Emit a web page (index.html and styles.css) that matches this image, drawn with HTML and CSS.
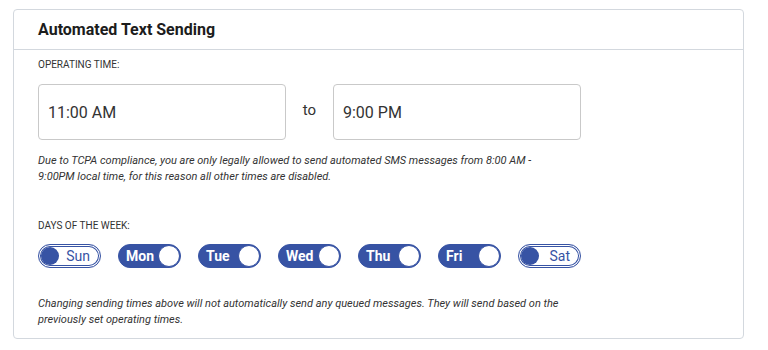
FILE: index.html
```html
<!DOCTYPE html>
<html>
<head>
<meta charset="utf-8">
<link rel="stylesheet" href="styles.css">
</head>
<body>
<div class="card">
  <div class="card-header">Automated Text Sending</div>
  <div class="card-body">
    <div class="label">OPERATING TIME:</div>
    <div class="time-row">
      <div class="input">11:00 AM</div>
      <div class="to">to</div>
      <div class="input">9:00 PM</div>
    </div>
    <p class="note">Due to TCPA compliance, you are only legally allowed to send automated SMS messages from 8:00 AM - 9:00PM local time, for this reason all other times are disabled.</p>
    <div class="label days-label">DAYS OF THE WEEK:</div>
    <div class="days">
      <div class="toggle off"><span class="knob"></span><span class="day">Sun</span></div>
      <div class="toggle on"><span class="day">Mon</span><span class="knob"></span></div>
      <div class="toggle on"><span class="day">Tue</span><span class="knob"></span></div>
      <div class="toggle on"><span class="day">Wed</span><span class="knob"></span></div>
      <div class="toggle on"><span class="day">Thu</span><span class="knob"></span></div>
      <div class="toggle on"><span class="day">Fri</span><span class="knob"></span></div>
      <div class="toggle off"><span class="knob"></span><span class="day">Sat</span></div>
    </div>
    <p class="note footer-note">Changing sending times above will not automatically send any queued messages. They will send based on the previously set operating times.</p>
  </div>
</div>
</body>
</html>
```
FILE: styles.css
```css
* { box-sizing: border-box; }
body {
  margin: 0;
  padding: 9px 24px 0 13px;
  background: #fff;
  font-family: Roboto, "Liberation Sans", Arial, sans-serif;
  color: #222;
}
.card {
  width: 731px;
  border: 1px solid #d3d8de;
  border-radius: 4px;
  background: #fff;
}
.card-header {
  height: 40px;
  padding: 10px 24px 0;
  font-size: 16px;
  font-weight: 700;
  color: #1c1c1c;
  border-bottom: 1px solid #d3d8de;
}
.card-body {
  padding: 9px 24px 10px;
}
.label {
  font-size: 10px;
  color: #333;
  line-height: 12px;
}
.time-row {
  display: flex;
  align-items: center;
  margin-top: 13px;
}
.input {
  width: 248px;
  height: 56px;
  border: 1px solid #c9c9c9;
  border-radius: 4px;
  padding: 0 9px;
  display: flex;
  align-items: center;
  font-size: 16px;
  color: #333;
}
.to {
  width: 47px;
  text-align: center;
  font-size: 15px;
  color: #333;
  padding-bottom: 4px;
}
.note {
  margin: 13px 0 0;
  font-size: 11px;
  font-style: italic;
  line-height: 16px;
  color: #333;
  width: 525px;
}
.days-label {
  margin-top: 35px;
}
.days {
  display: flex;
  gap: 17px;
  margin-top: 12px;
}
.toggle {
  width: 63px;
  height: 24px;
  border-radius: 12px;
  border: 1px solid #3753a4;
  display: flex;
  align-items: center;
  justify-content: space-between;
  font-size: 14px;
}
.toggle.on {
  background: #3753a4;
  color: #fff;
  font-weight: 700;
  padding: 0 0 0 7px;
}
.toggle.on .knob {
  width: 22px;
  height: 22px;
  border-radius: 50%;
  background: #fff;
  border: 1.5px solid #3753a4;
}
.toggle.off {
  background: #fff;
  color: #3753a4;
  padding: 0 10px 0 2px;
  box-shadow: inset 0 0 0 1px #fff, inset 0 0 0 2px #3753a4;
}
.toggle.off .knob {
  width: 18px;
  height: 18px;
  border-radius: 50%;
  background: #3753a4;
}
.footer-note {
  margin-top: 28px;
}
```
